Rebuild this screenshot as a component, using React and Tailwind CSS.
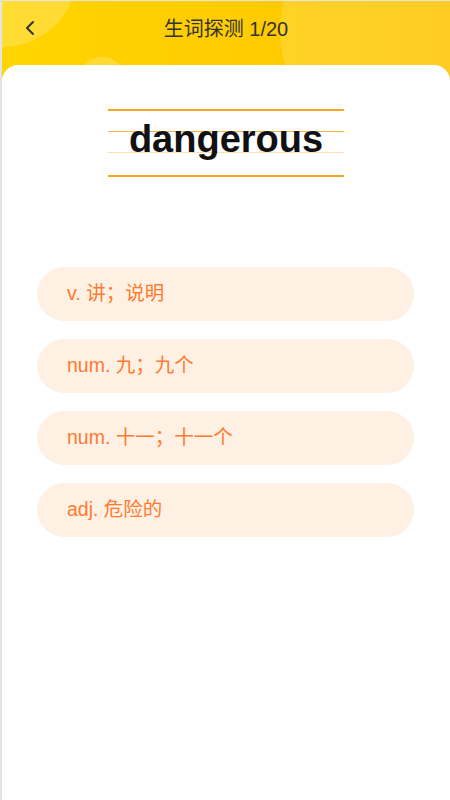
import React from "react";
import { ChevronLeft } from "lucide-react";

const options = ["v. 讲；说明", "num. 九；九个", "num. 十一；十一个", "adj. 危险的"];

export default function App() {
    return (
        <div
            className="w-[450px] h-[800px] flex flex-col border-l-2 border-t border-[#e4e4e4] bg-gradient-to-r from-[#ffd500] to-[#ffc400] overflow-hidden"
            style={{ fontFamily: '"Liberation Sans", Arial, "Noto Sans CJK SC", sans-serif' }}
        >
            {/* header */}
            <div className="relative h-[64px] shrink-0 flex items-center justify-center">
                <div className="absolute -left-[76px] -top-[106px] w-[152px] h-[152px] rounded-full bg-white/20" />
                <div className="absolute left-[76px] top-[56px] w-[48px] h-[48px] rounded-full bg-white/20" />
                <div className="absolute left-[278px] -top-[90px] w-[240px] h-[240px] rounded-full bg-white/15" />
                <button className="absolute left-[16px] top-[15px] text-[#333]">
                    <ChevronLeft size={24} strokeWidth={2} />
                </button>
                <h1 className="relative text-[20px] text-[#333] -mt-[8px]">生词探测 1/20</h1>
            </div>

            {/* card */}
            <div className="flex-1 bg-white rounded-t-[16px] flex flex-col items-center">
                <div className="w-[236px] mt-[44px] h-[68px] border-y-2 border-[#f5a623] relative">
                    <div className="absolute left-0 right-0 top-[20px] border-t border-[#f6b445]" />
                    <div className="absolute left-0 right-0 top-[41px] border-t border-[#fbe0b0]" />
                    <div className="relative text-center text-[38px] leading-[38px] pt-[9px] font-bold text-[#111]">
                        dangerous
                    </div>
                </div>

                <div className="self-stretch mt-[90px] ml-[35px] mr-[36px] flex flex-col gap-[18px]">
                    {options.map((o) => (
                        <div
                            key={o}
                            className="h-[54px] rounded-full bg-[#fff0e4] flex items-center pl-[30px] text-[19.5px] text-[#ff7a2e]"
                        >
                            {o}
                        </div>
                    ))}
                </div>
            </div>
        </div>
    );
}
